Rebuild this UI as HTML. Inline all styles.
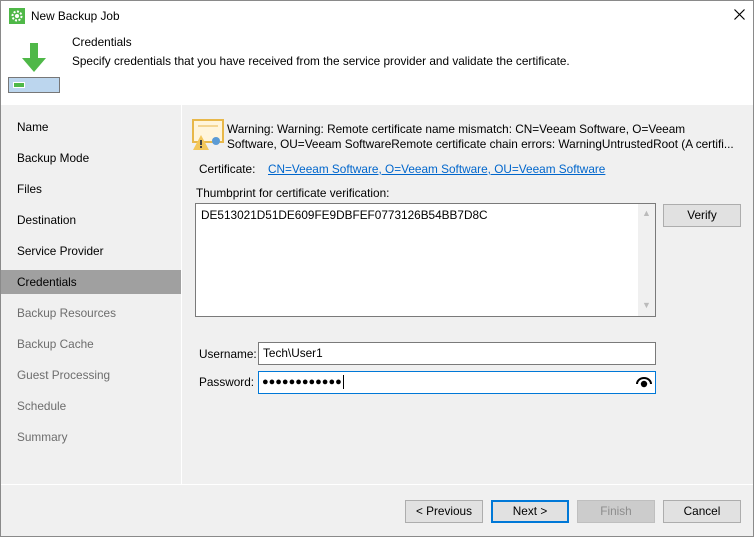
<!DOCTYPE html>
<html><head><style>
*{box-sizing:border-box;margin:0;padding:0}
body{width:754px;height:537px;overflow:hidden;font-family:"Liberation Sans","DejaVu Sans",sans-serif;font-size:11.8px;color:#000;background:#f0f0f0;position:relative}
.win{position:absolute;left:0;top:0;width:754px;height:537px;border:1px solid #8a8a8a;background:#f0f0f0}
.abs{position:absolute}
.nav div{position:absolute;left:0;width:180px;height:24px;line-height:24px;padding-left:16px}
.btn{position:absolute;top:499px;width:78px;height:23px;border:1px solid #adadad;background:#e1e1e1;text-align:center;line-height:21px}
</style></head><body><div class="win">
<div class="abs" style="left:0;top:0;width:752px;height:104px;background:#fff"></div>
<svg class="abs" style="left:8px;top:7px" width="16" height="16"><rect width="16" height="16" fill="#4fb848"/><circle cx="8" cy="8" r="4.5" fill="none" stroke="#fff" stroke-width="2" stroke-dasharray="2 1.5"/><circle cx="8" cy="8" r="2" fill="#fff"/></svg>
<div class="abs" style="left:30px;top:8px">New Backup Job</div>
<svg class="abs" style="left:733px;top:8px" width="11" height="11"><path d="M0.5 0.5L10.5 10.5M10.5 0.5L0.5 10.5" stroke="#000" stroke-width="1.2"/></svg>
<div class="abs" style="left:71px;top:34px">Credentials</div>
<div class="abs" style="left:71px;top:53px">Specify credentials that you have received from the service provider and validate the certificate.</div>
<svg class="abs" style="left:18px;top:42px" width="32" height="30"><path d="M11 0h8v15h8L15 29 3 15h8z" fill="#4fb848"/></svg>
<div class="abs" style="left:7px;top:76px;width:52px;height:16px;border:1px solid #777;background:#bcd6ee"></div>
<div class="abs" style="left:13px;top:82px;width:10px;height:4px;background:#4fb848;outline:1px solid #fff"></div>
<div class="abs" style="left:180px;top:104px;width:1px;height:379px;background:#fff"></div>
<div class="nav">
<div style="top:114px">Name</div><div style="top:145px">Backup Mode</div><div style="top:176px">Files</div><div style="top:207px">Destination</div><div style="top:238px">Service Provider</div>
<div style="top:269px;background:#a0a0a0">Credentials</div>
<div style="top:300px;color:#6d6d6d">Backup Resources</div><div style="top:331px;color:#6d6d6d">Backup Cache</div><div style="top:362px;color:#6d6d6d">Guest Processing</div><div style="top:393px;color:#6d6d6d">Schedule</div><div style="top:424px;color:#6d6d6d">Summary</div>
</div>
<svg class="abs" style="left:191px;top:118px" width="34" height="32"><rect x="1" y="1" width="30" height="22" fill="#fff5dc" stroke="#e8b84a" stroke-width="2"/><line x1="6" y1="7" x2="26" y2="7" stroke="#e8b84a"/><circle cx="24" cy="22" r="4" fill="#5b9bd5"/><path d="M1 31L9 16 17 31z" fill="#f3c75b"/><rect x="8" y="21" width="2" height="5" fill="#444"/><rect x="8" y="27" width="2" height="2" fill="#444"/></svg>
<div class="abs" style="left:226px;top:121px;line-height:15px;width:520px">Warning: Warning: Remote certificate name mismatch: CN=Veeam Software, O=Veeam<br>Software, OU=Veeam SoftwareRemote certificate chain errors: WarningUntrustedRoot (A certifi...</div>
<div class="abs" style="left:198px;top:161px">Certificate:</div>
<div class="abs" style="left:267px;top:161px;color:#0066cc;text-decoration:underline">CN=Veeam Software, O=Veeam Software, OU=Veeam Software</div>
<div class="abs" style="left:195px;top:185px">Thumbprint for certificate verification:</div>
<div class="abs" style="left:194px;top:202px;width:461px;height:114px;background:#fff;border:1px solid #7a7a7a;padding:4px 5px">DE513021D51DE609FE9DBFEF0773126B54BB7D8C</div>
<div class="abs" style="left:637px;top:203px;width:17px;height:112px;background:#f0f0f0;color:#bbb;font-size:9px;text-align:center"><div style="margin-top:4px">▲</div><div style="margin-top:82px">▼</div></div>
<div class="abs" style="left:662px;top:203px;width:78px;height:23px;border:1px solid #adadad;background:#e1e1e1;text-align:center;line-height:21px">Verify</div>
<div class="abs" style="left:198px;top:346px">Username:</div>
<div class="abs" style="left:257px;top:341px;width:398px;height:23px;background:#fff;border:1px solid #7a7a7a;padding:3px 4px">Tech\User1</div>
<div class="abs" style="left:198px;top:374px">Password:</div>
<div class="abs" style="left:257px;top:370px;width:398px;height:23px;background:#fff;border:1px solid #0078d7;padding:3px 3px;font-size:11px;letter-spacing:0;line-height:15px">●●●●●●●●●●●●<span style="display:inline-block;width:1px;height:14px;background:#000;vertical-align:middle;margin-left:1px"></span></div>
<svg class="abs" style="left:635px;top:375px" width="16" height="12"><path d="M1 8A7 6 0 0 1 15 8" fill="none" stroke="#000" stroke-width="2"/><circle cx="8" cy="8" r="3.2" fill="#000"/></svg>
<div class="abs" style="left:0;top:483px;width:752px;height:1px;background:#fff"></div>
<div class="btn" style="left:404px">&lt; Previous</div>
<div class="btn" style="left:490px;border:2px solid #0078d7;line-height:19px">Next &gt;</div>
<div class="btn" style="left:576px;background:#ccc;border-color:#bfbfbf;color:#8d8d8d">Finish</div>
<div class="btn" style="left:662px">Cancel</div>
</div></body></html>
